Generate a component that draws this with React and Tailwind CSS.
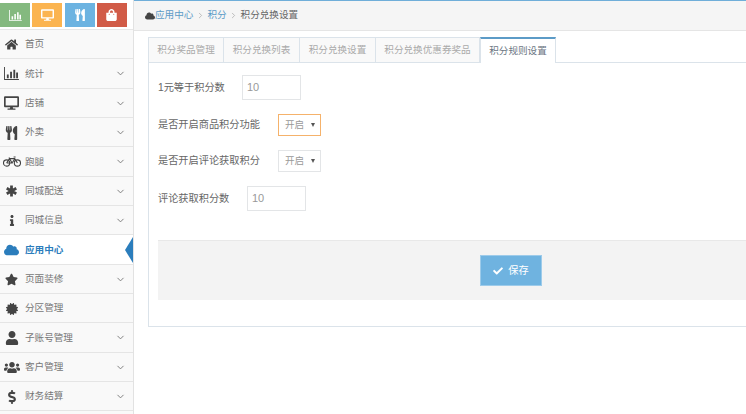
import { ChevronDown, ChevronRight } from 'lucide-react';
import {
  FaHome, FaDesktop, FaUtensils, FaInfo, FaCloud, FaStar,
  FaCertificate, FaUser, FaUsers, FaDollarSign, FaCheck, FaShoppingBag,
} from 'react-icons/fa';

const BarsIcon = ({ className }) => (
  <svg viewBox="0 0 16 14" className={className} fill="currentColor">
    <path d="M0 0h1v13h15v1H0z" />
    <path d="M3 8h2v4H3zM6.5 5h2v7h-2zM10 3h2v9h-2zM13 6h2v6h-2z" />
  </svg>
);

const BikeIcon = ({ className }) => (
  <svg viewBox="0 0 18 11" className={className} fill="none" stroke="currentColor" strokeWidth="1.1">
    <circle cx="3.6" cy="7" r="3.1" />
    <circle cx="14.4" cy="7" r="3.1" />
    <path d="M3.6 7 6.5 2.6h5.2L14.4 7M6 1.4 9 7h-5.4M9 7l3-4.4M10.6 1h2" />
  </svg>
);

const AsteriskIcon = ({ className }) => (
  <svg viewBox="0 0 12 12" className={className} fill="none" stroke="currentColor" strokeWidth="3">
    <path d="M6 0v12M0.8 3l10.4 6M0.8 9l10.4-6" />
  </svg>
);

const menu = [
  { name: '首页', icon: FaHome, size: 'w-[13px] h-[13px]' },
  { name: '统计', icon: BarsIcon, size: 'w-[15px] h-[13px]', arrow: true },
  { name: '店铺', icon: FaDesktop, size: 'w-[15px] h-[14px]', arrow: true },
  { name: '外卖', icon: FaUtensils, size: 'w-[13px] h-[14px]', arrow: true },
  { name: '跑腿', icon: BikeIcon, size: 'w-[18px] h-[11px]', arrow: true },
  { name: '同城配送', icon: AsteriskIcon, size: 'w-[11px] h-[12px]', arrow: true },
  { name: '同城信息', icon: FaInfo, size: 'w-[10px] h-[11px]', arrow: true },
  { name: '应用中心', icon: FaCloud, size: 'w-[15px] h-[14px]', active: true },
  { name: '页面装修', icon: FaStar, size: 'w-[13px] h-[13px]', arrow: true },
  { name: '分区管理', icon: FaCertificate, size: 'w-[12px] h-[12px]' },
  { name: '子账号管理', icon: FaUser, size: 'w-[14px] h-[14px]', arrow: true },
  { name: '客户管理', icon: FaUsers, size: 'w-[16px] h-[15px]', arrow: true },
  { name: '财务结算', icon: FaDollarSign, size: 'w-[12px] h-[14px]', arrow: true },
];

const tabs = [
  { name: '积分奖品管理', width: 'w-[76px]' },
  { name: '积分兑换列表', width: 'w-[76px]' },
  { name: '积分兑换设置', width: 'w-[76px]' },
  { name: '积分兑换优惠券奖品', width: 'w-[104px]' },
];

const SelectBox = ({ focused }) => (
  <div className={`w-[43px] h-[22px] flex items-center justify-between pl-[6px] pr-[5px] bg-white border text-[#999] text-[9.6px] ${focused ? 'border-[#f5b26b] text-[#777]' : 'border-[#e3e5e7]'}`}>
    <span>开启</span>
    <span className="w-0 h-0 border-l-[2.5px] border-r-[2.5px] border-t-[4px] border-l-transparent border-r-transparent border-t-[#555]" />
  </div>
);

const Input = () => (
  <div className="w-[59px] h-[25px] flex items-center pl-[4px] bg-white border border-[#e3e5e7] text-[#999] text-[11px]">10</div>
);

export default function App() {
  return (
    <div className="flex w-[746px] h-[414px] overflow-hidden bg-white text-[9.6px] text-[#666] font-['Liberation_Sans','Noto_Sans_CJK_SC',sans-serif]">
      {/* 侧边栏 */}
      <aside className="w-[134px] shrink-0 bg-[#f9f9f9] border-r border-[#e2e2e2]">
        <div className="h-[30px] flex gap-[2.33px] pt-[3px] bg-white border-b border-[#e7e7e7] text-white">
          <div className="w-[30px] h-[24px] bg-[#84b97f] flex items-center justify-center"><BarsIcon className="w-[13px] h-[11px]" /></div>
          <div className="w-[30px] h-[24px] bg-[#fbb450] flex items-center justify-center"><FaDesktop className="w-[13px] h-[12px]" /></div>
          <div className="w-[30px] h-[24px] bg-[#6cb3e1] flex items-center justify-center"><FaUtensils className="w-[10px] h-[12px]" /></div>
          <div className="w-[30px] h-[24px] bg-[#d15b47] flex items-center justify-center"><FaShoppingBag className="w-[11px] h-[12px]" /></div>
        </div>
        {menu.map((item) => {
          const Icon = item.icon;
          return (
            <div
              key={item.name}
              className={`relative h-[29.33px] pt-[1px] flex items-center border-b border-[#e5e5e5] ${item.active ? 'bg-white text-[#2b7dbc] font-bold' : 'text-[#777]'}`}
            >
              <span className={`w-[21px] ml-[1px] flex justify-center ${item.active ? 'text-[#2b7dbc]' : 'text-[#444]'}`}>
                <Icon className={item.size} />
              </span>
              <span className="ml-[3px]">{item.name}</span>
              {item.arrow && <ChevronDown className="absolute right-[7px] w-[11px] h-[11px] text-[#777]" />}
              {item.active && (
                <span className="absolute right-0 w-0 h-0 border-y-[13px] border-r-[8px] border-y-transparent border-r-[#2b7dbc]" />
              )}
            </div>
          );
        })}
      </aside>

      {/* 主内容 */}
      <main className="flex-1 min-w-0 border-t border-[#6faed9]">
        <div className="h-[30px] flex items-center pl-[11px] bg-[#f5f5f5] border-b border-[#e5e5e5] text-[#777]">
          <FaCloud className="w-[10px] h-[10px] text-[#444]" />
          <span className="text-[#5c9bc7]">应用中心</span>
          <ChevronRight className="w-[9px] h-[9px] mx-[2.5px] text-[#aaa]" />
          <span className="text-[#5c9bc7]">积分</span>
          <ChevronRight className="w-[9px] h-[9px] mx-[2.5px] text-[#aaa]" />
          <span className="text-[#666]">积分兑换设置</span>
        </div>

        <div className="mt-[6px] ml-[14px]">
          <div className="flex h-[26px] relative">
            {tabs.map((tab) => (
              <div key={tab.name} className={`${tab.width} flex items-center justify-center bg-[#f9f9f9] text-[#aaa] border border-[#dbe3ea] border-l-0 first:border-l`}>
                {tab.name}
              </div>
            ))}
            <div className="w-[76px] h-[26px] flex items-center justify-center bg-white text-[#6b7683] border-t-2 border-t-[#5c9bc7] border-x border-x-[#dbe3ea]">
              积分规则设置
            </div>
            <div className="flex-1 border-b border-[#dbe3ea]" />
          </div>

          <div className="h-[264px] pt-[12px] pl-[9px] border-l border-b border-[#dbe3ea] text-[10.2px]">
            <div className="flex items-center h-[25px]">
              <span className="w-[84px]">1元等于积分数</span>
              <Input />
            </div>
            <div className="flex items-center h-[22px] mt-[14px]">
              <span className="w-[120px]">是否开启商品积分功能</span>
              <SelectBox focused />
            </div>
            <div className="flex items-center h-[22px] mt-[14px]">
              <span className="w-[120px]">是否开启评论获取积分</span>
              <SelectBox />
            </div>
            <div className="flex items-center h-[25px] mt-[14px]">
              <span className="w-[89px]">评论获取积分数</span>
              <Input />
            </div>
            <div className="h-[60px] mt-[29px] flex items-center bg-[#f3f3f3] border-t border-[#e8e8e8] pl-[322px]">
              <button className="w-[62px] h-[31px] flex items-center justify-center gap-[5px] bg-[#6fb3e0] border border-[#9dcbea] text-white text-[10.2px]">
                <FaCheck className="w-[10px] h-[10px]" />
                保存
              </button>
            </div>
          </div>
        </div>
      </main>
    </div>
  );
}
